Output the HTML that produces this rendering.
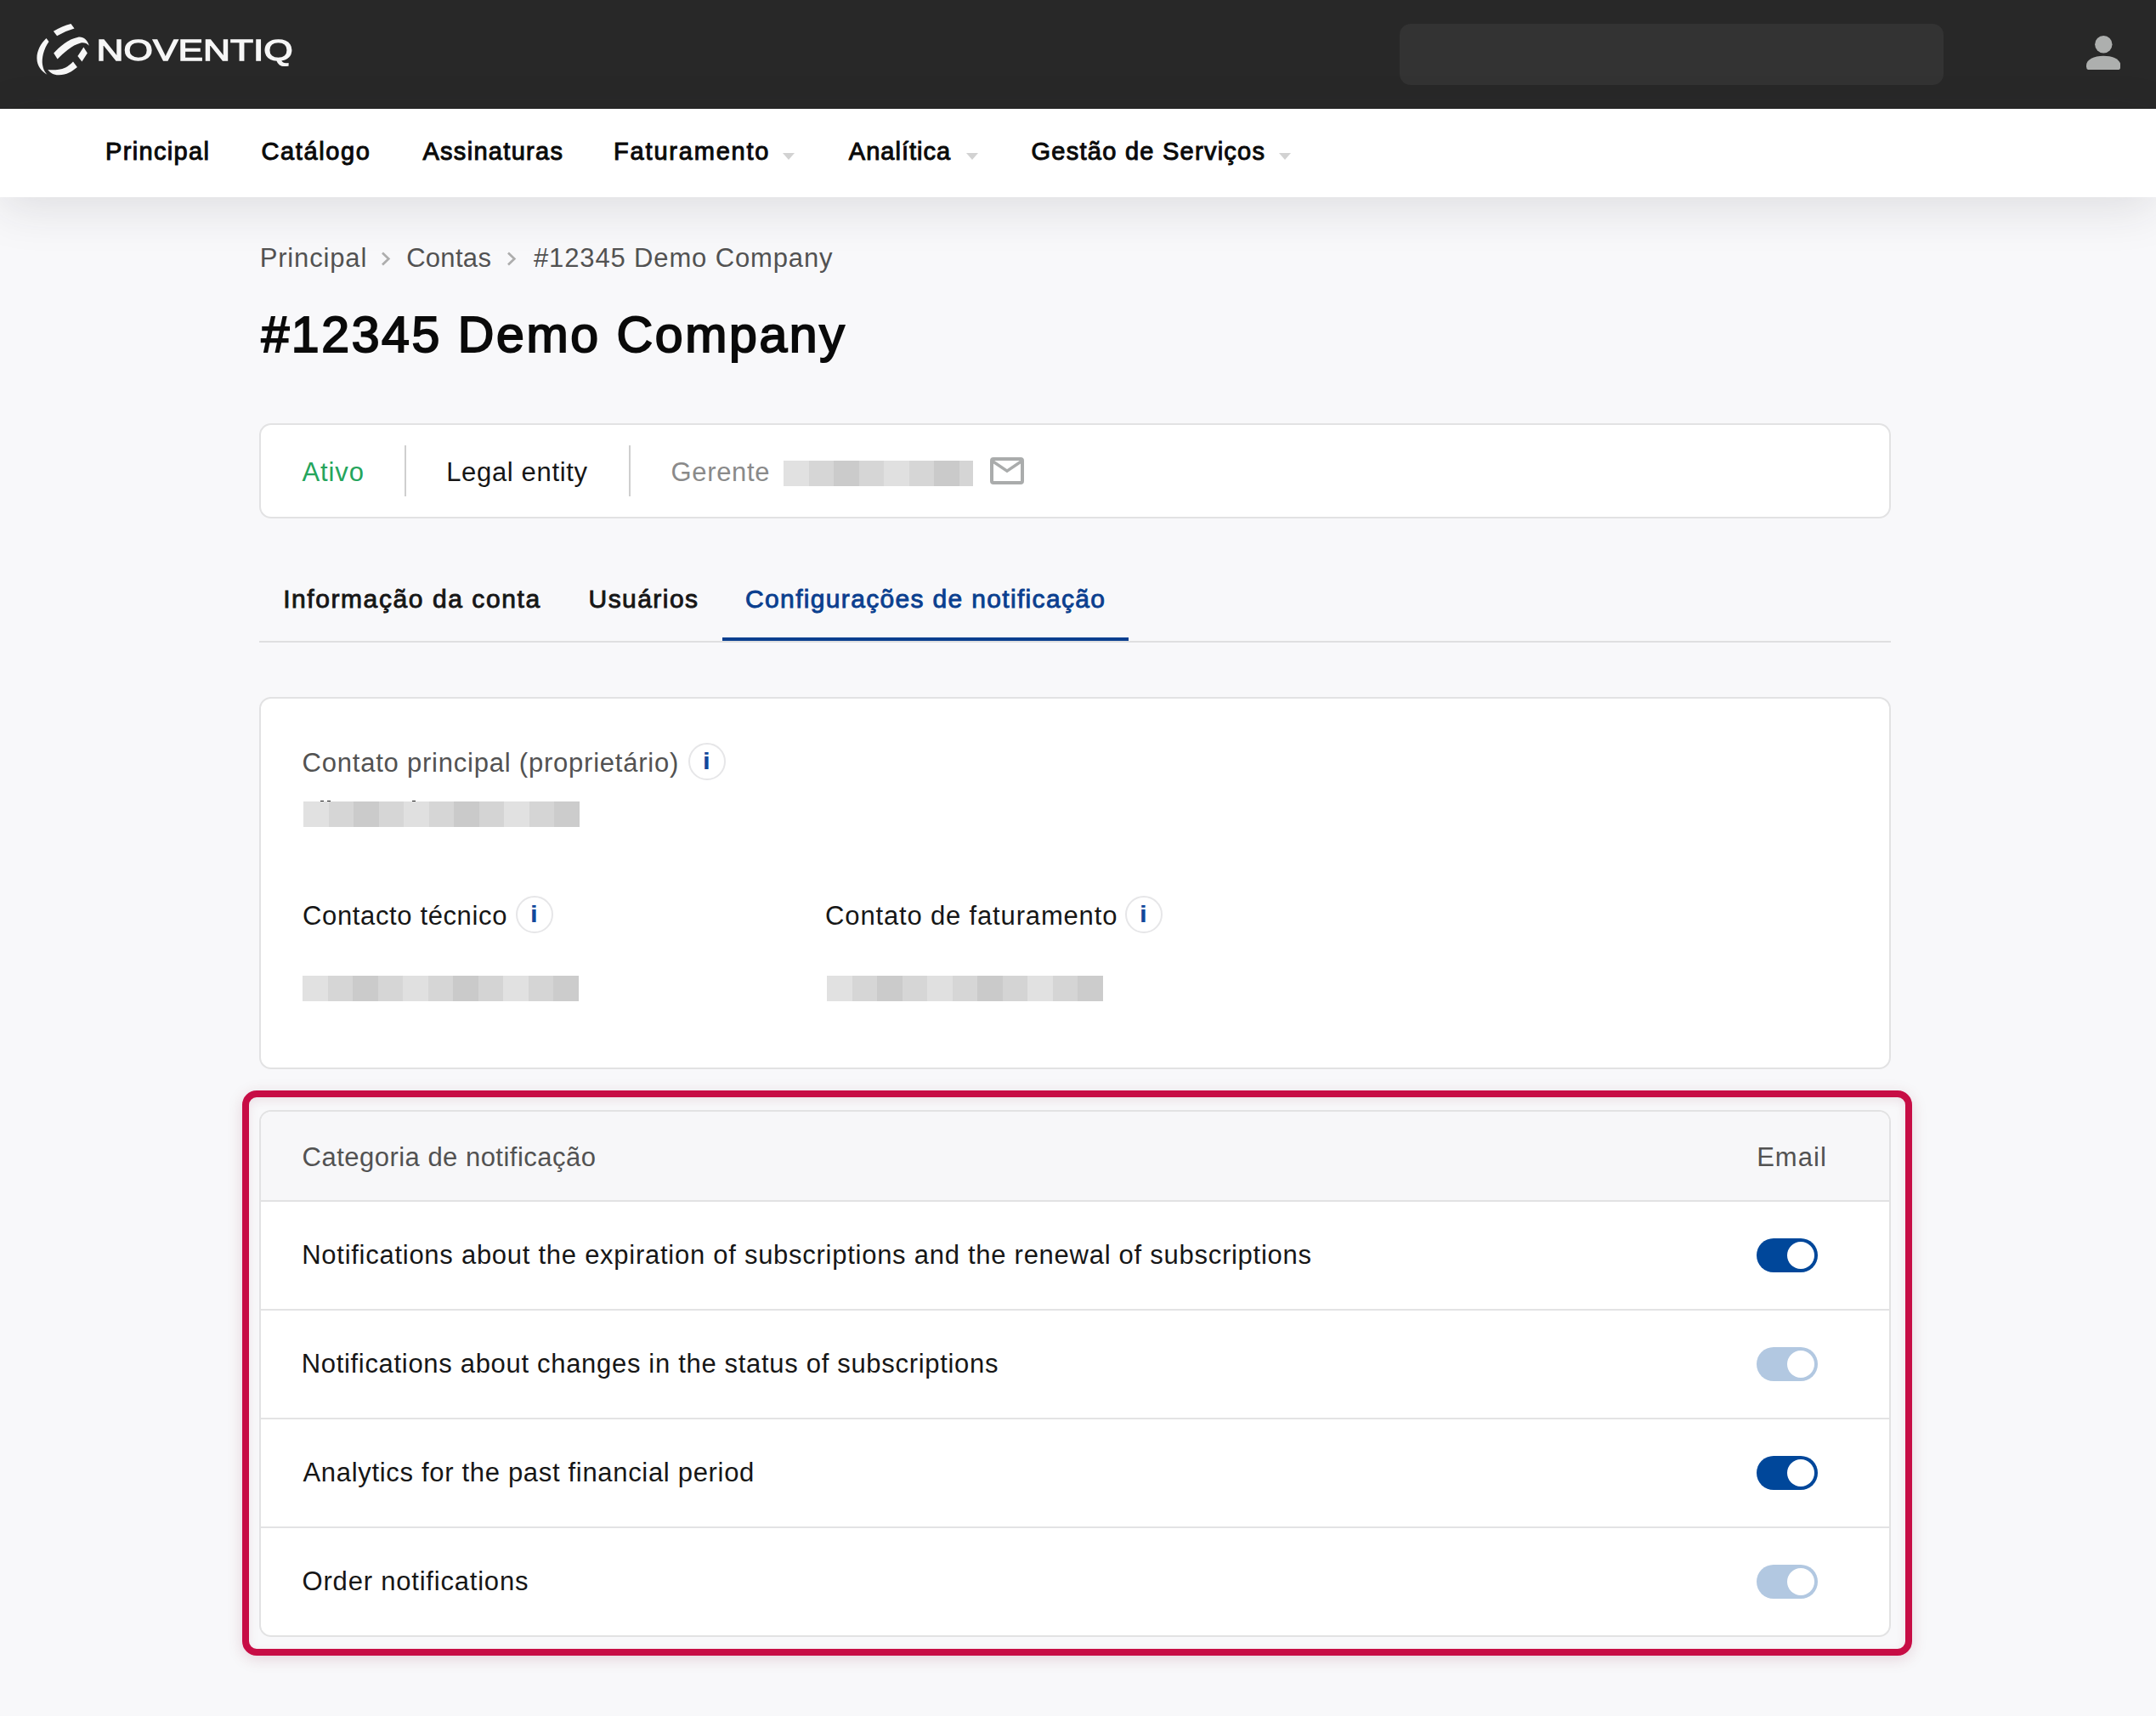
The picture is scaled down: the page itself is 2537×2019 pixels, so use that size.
<!DOCTYPE html>
<html lang="pt">
<head>
<meta charset="utf-8">
<title>#12345 Demo Company</title>
<style>
*{box-sizing:border-box;margin:0;padding:0}
html,body{width:2537px;height:2019px;overflow:hidden}
body{position:relative;background:#f8f8fa;font-family:"Liberation Sans",sans-serif;color:#161616}
ol,li{list-style:none}
h1{margin:0}
.t{position:absolute;white-space:nowrap;line-height:1;font-family:"Liberation Sans",sans-serif}
#n1{left:124.08px;top:164.45px;font-size:29px;font-weight:400;color:#0a0a0a;letter-spacing:1.320px;-webkit-text-stroke:1.0px #0a0a0a}
#n2{left:307.52px;top:164.45px;font-size:29px;font-weight:400;color:#0a0a0a;letter-spacing:1.627px;-webkit-text-stroke:1.0px #0a0a0a}
#n3{left:497.40px;top:164.45px;font-size:29px;font-weight:400;color:#0a0a0a;letter-spacing:1.306px;-webkit-text-stroke:1.0px #0a0a0a}
#n4{left:722.10px;top:164.45px;font-size:29px;font-weight:400;color:#0a0a0a;letter-spacing:1.798px;-webkit-text-stroke:1.0px #0a0a0a}
#n5{left:998.84px;top:164.45px;font-size:29px;font-weight:400;color:#0a0a0a;letter-spacing:1.008px;-webkit-text-stroke:1.0px #0a0a0a}
#n6{left:1213.50px;top:164.45px;font-size:29px;font-weight:400;color:#0a0a0a;letter-spacing:1.260px;-webkit-text-stroke:1.0px #0a0a0a}
#b1{left:305.70px;top:287.76px;font-size:31px;font-weight:400;color:#525252;letter-spacing:0.839px}
#b2{left:478.14px;top:287.76px;font-size:31px;font-weight:400;color:#525252;letter-spacing:0.309px}
#b3{left:628.00px;top:287.76px;font-size:31px;font-weight:400;color:#525252;letter-spacing:0.860px}
#h1{left:307.42px;top:364.96px;font-size:59px;font-weight:400;color:#0a0a0a;letter-spacing:2.597px;-webkit-text-stroke:2.0px #0a0a0a}
#s1{left:355.48px;top:539.66px;font-size:31px;font-weight:400;color:#25a55c;letter-spacing:0.885px}
#s2{left:525.20px;top:539.66px;font-size:31px;font-weight:400;color:#161616;letter-spacing:0.658px}
#s3{left:789.62px;top:539.66px;font-size:31px;font-weight:400;color:#8a8a8a;letter-spacing:0.631px}
#t1{left:333.14px;top:690.31px;font-size:30px;font-weight:400;color:#161616;letter-spacing:1.580px;-webkit-text-stroke:0.9px #161616}
#t2{left:692.60px;top:690.31px;font-size:30px;font-weight:400;color:#161616;letter-spacing:1.432px;-webkit-text-stroke:0.9px #161616}
#t3{left:877.10px;top:690.31px;font-size:30px;font-weight:400;color:#0a3f8f;letter-spacing:1.333px;-webkit-text-stroke:0.9px #0a3f8f}
#c1{left:355.62px;top:882.06px;font-size:31px;font-weight:400;color:#525252;letter-spacing:0.776px}
#c2{left:356.06px;top:1061.56px;font-size:31px;font-weight:400;color:#161616;letter-spacing:0.628px}
#c3{left:971.08px;top:1061.56px;font-size:31px;font-weight:400;color:#161616;letter-spacing:0.838px}
#th1{left:355.60px;top:1346.06px;font-size:31px;font-weight:400;color:#525252;letter-spacing:0.478px}
#th2{left:2067.16px;top:1346.06px;font-size:31px;font-weight:400;color:#525252;letter-spacing:1.031px}
#r1{left:355.20px;top:1461.06px;font-size:31px;font-weight:400;color:#161616;letter-spacing:0.733px}
#r2{left:354.70px;top:1589.06px;font-size:31px;font-weight:400;color:#161616;letter-spacing:0.686px}
#r3{left:356.50px;top:1717.06px;font-size:31px;font-weight:400;color:#161616;letter-spacing:0.682px}
#r4{left:355.58px;top:1845.06px;font-size:31px;font-weight:400;color:#161616;letter-spacing:0.795px}

/* top bar */
header.top{position:absolute;left:0;top:0;width:2537px;height:127.5px;background:#282828;border-bottom:1px solid #1d1d1d}
.logo{position:absolute;left:40px;top:24px;width:320px;height:70px;filter:blur(.45px)}
.search{position:absolute;left:1647px;top:28px;width:640px;height:72px;border-radius:13px;background:#333333}
.user{position:absolute;left:2454.8px;top:41.8px;width:40.4px;height:40.6px}

/* menu */
.menu{position:absolute;left:0;top:127.5px;width:2537px;height:104.5px;background:#fff;box-shadow:0 12px 56px rgba(40,40,50,.125)}
.caret{position:absolute;width:0;height:0;border-left:7.9px solid transparent;border-right:7.9px solid transparent;border-top:8.2px solid #d2d2d2;top:180px}

/* breadcrumb chevrons */
.chev{position:absolute;top:294.6px;width:12px;height:19px}

/* cards */
.card{position:absolute;left:305px;width:1920px;background:#fff;border:2px solid #e2e2e3;border-radius:14px}
.status{top:498px;height:112px}
.vsep{position:absolute;top:524px;width:2px;height:60px;background:#cfcfcf}
.mail{position:absolute;left:1165px;top:538px;width:40px;height:32px}
.px{position:absolute;display:flex}
.px i{display:block;height:100%}
.bit{position:absolute;top:941.6px;width:4px;height:1.6px;background:#222}

/* tabs */
.tabline{position:absolute;left:305px;top:754px;width:1920px;height:2px;background:#dfdfe0}
.tabactive{position:absolute;left:850px;top:750px;width:478px;height:4px;background:#0a3f8f}

.contacts{top:820px;height:438px}
.info{position:absolute;width:44px;height:44px;border:2px solid #e6e6e8;border-radius:50%;background:#fff}
.info b{position:absolute;left:0;top:0;width:40px;height:40px;text-align:center;font:700 28.5px/40px "Liberation Sans",sans-serif;color:#12489b;transform:translate(-0.6px,-1.1px) scaleX(1.1)}

/* highlight */
.hl{position:absolute;left:284.9px;top:1282.8px;width:1965.2px;height:665.3px;border:8.3px solid #c70d45;border-radius:17px;box-shadow:0 4px 18px rgba(120,0,40,.15), inset 0 4px 12px rgba(120,0,40,.09)}
.tbl{top:1306px;height:620px;overflow:hidden;background:#fff}
.tbl .head{position:absolute;left:0;top:0;width:100%;height:105.5px;background:#f7f7f9;border-bottom:2px solid #e2e2e3}
.tbl .sep{position:absolute;left:0;width:100%;height:2px;background:#e3e3e4}
.tg{position:absolute;left:2067px;width:72px;height:40px;border-radius:20px;background:#00479a}
.tg:after{content:"";position:absolute;right:4px;top:4px;width:32px;height:32px;border-radius:50%;background:#fff}
.tg.off{background:#b2c8e1}
</style>
</head>
<body>

<header class="top">
  <svg class="logo" viewBox="0 0 320 70">
    <g fill="#f6f6f6">
      <path d="M22.9 12.8 Q33 6.5 43.5 3.9 L47.5 9.6 Q37 12.5 27.1 18.2 Z"/>
      <path d="M14.5 21 L17.5 25 C11 34 9 45 10 52 C11 58 13 61 15.5 63.8 C9 60 3.5 54 3.4 44.5 C3.3 36 8 27 14.5 21 Z"/>
      <path d="M23.2 38.5 C30 31 40 22 51.9 19.7 C58 18.8 63 23 64.8 29.8 C62 26.5 58 25.8 54.4 26.7 C45 29 35 38 27.6 45.5 Z"/>
      <path d="M58.4 31.6 L62.8 38.5 L56.4 48.5 L51.4 42 Z"/>
      <path d="M46 48.5 L50.9 54.9 C45 60 38 64 29.6 64.3 C23 64.5 19 61.5 16.3 58 C22 58.5 30 58.5 37.1 55.4 C40 54 43 51.5 46 48.5 Z"/>
    </g>
    <text x="73.6" y="46.9" font-family="Liberation Sans, sans-serif" font-size="35" fill="#f6f6f6" stroke="#f6f6f6" stroke-width="1.3" textLength="231" lengthAdjust="spacingAndGlyphs">NOVENTIQ</text>
  </svg>
  <div class="search"></div>
  <svg class="user" viewBox="0 0 40.4 40.6"><circle cx="20.3" cy="10.2" r="10.2" fill="#adafae"/><path d="M0 36.2 V35 C0 28 9 23.7 20.2 23.7 S40.4 28 40.4 35 V36.2 Q40.4 40.5 36 40.5 H4.4 Q0 40.5 0 36.2 Z" fill="#adafae"/></svg>
</header>

<nav aria-label="Menu principal">
  <div class="menu"></div>
  <a class="t" id="n1">Principal</a>
  <a class="t" id="n2">Catálogo</a>
  <a class="t" id="n3">Assinaturas</a>
  <a class="t" id="n4">Faturamento</a><i class="caret" style="left:921px"></i>
  <a class="t" id="n5">Analítica</a><i class="caret" style="left:1137px"></i>
  <a class="t" id="n6">Gestão de Serviços</a><i class="caret" style="left:1505px"></i>
</nav>

<main>
  <ol class="crumbs">
    <li><a class="t" id="b1">Principal</a><svg class="chev" style="left:448px" viewBox="0 0 12 19"><path d="M2 2.6 L9.3 9.5 L2 16.4" fill="none" stroke="#adadad" stroke-width="2.7"/></svg></li>
    <li><a class="t" id="b2">Contas</a><svg class="chev" style="left:596px" viewBox="0 0 12 19"><path d="M2 2.6 L9.3 9.5 L2 16.4" fill="none" stroke="#adadad" stroke-width="2.7"/></svg></li>
    <li><span class="t" id="b3">#12345 Demo Company</span></li>
  </ol>

  <h1 class="t" id="h1">#12345 Demo Company</h1>

  <section class="summary">
    <div class="card status"></div>
    <span class="t" id="s1">Ativo</span>
    <i class="vsep" style="left:476px"></i>
    <span class="t" id="s2">Legal entity</span>
    <i class="vsep" style="left:740.3px"></i>
    <span class="t" id="s3">Gerente</span>
    <div class="px" style="left:922px;top:542.2px;width:223px;height:29.5px"><i style="width:29.5px;background:#e1e1e1"></i><i style="width:29.5px;background:#d6d6d6"></i><i style="width:29.5px;background:#cbcbcb"></i><i style="width:29.5px;background:#d6d6d6"></i><i style="width:29.5px;background:#e0e0e0"></i><i style="width:29.5px;background:#d6d6d6"></i><i style="width:29.5px;background:#cacaca"></i><i style="width:16.5px;background:#d5d5d5"></i></div>
    <svg class="mail" viewBox="0 0 40 32"><rect x="2" y="2" width="36" height="28" rx="2" fill="none" stroke="#aaacac" stroke-width="4"/><path d="M3.5 5 L20 16.2 L36.5 5" fill="none" stroke="#aaacac" stroke-width="3.5"/></svg>
  </section>

  <div class="tabs" role="tablist">
    <a class="t" role="tab" id="t1">Informação da conta</a>
    <a class="t" role="tab" id="t2">Usuários</a>
    <a class="t" role="tab" aria-selected="true" id="t3">Configurações de notificação</a>
    <i class="tabline"></i><i class="tabactive"></i>
  </div>

  <section class="contactbox">
    <div class="card contacts"></div>
    <div class="field">
      <label class="t" id="c1">Contato principal (proprietário)</label><span class="info" style="left:810px;top:873.9px"><b>i</b></span>
      <i class="bit" style="left:376.5px"></i><i class="bit" style="left:385px"></i><i class="bit" style="left:485px"></i>
      <div class="px" style="left:357px;top:943px;width:325px;height:29.9px"><i style="width:29.55px;background:#e1e1e1"></i><i style="width:29.55px;background:#d6d6d6"></i><i style="width:29.55px;background:#cbcbcb"></i><i style="width:29.55px;background:#d6d6d6"></i><i style="width:29.55px;background:#e0e0e0"></i><i style="width:29.55px;background:#d6d6d6"></i><i style="width:29.55px;background:#cacaca"></i><i style="width:29.55px;background:#d4d4d4"></i><i style="width:29.55px;background:#e1e1e1"></i><i style="width:29.55px;background:#d5d5d5"></i><i style="width:29.55px;background:#cccccc"></i></div>
    </div>
    <div class="field">
      <label class="t" id="c2">Contacto técnico</label><span class="info" style="left:606.9px;top:1053.8px"><b>i</b></span>
      <div class="px" style="left:356px;top:1148px;width:325px;height:29.5px"><i style="width:29.55px;background:#e1e1e1"></i><i style="width:29.55px;background:#d6d6d6"></i><i style="width:29.55px;background:#cbcbcb"></i><i style="width:29.55px;background:#d6d6d6"></i><i style="width:29.55px;background:#e0e0e0"></i><i style="width:29.55px;background:#d6d6d6"></i><i style="width:29.55px;background:#cacaca"></i><i style="width:29.55px;background:#d4d4d4"></i><i style="width:29.55px;background:#e1e1e1"></i><i style="width:29.55px;background:#d5d5d5"></i><i style="width:29.55px;background:#cccccc"></i></div>
    </div>
    <div class="field">
      <label class="t" id="c3">Contato de faturamento</label><span class="info" style="left:1323.9px;top:1053.8px"><b>i</b></span>
      <div class="px" style="left:973px;top:1148px;width:325px;height:29.5px"><i style="width:29.55px;background:#e1e1e1"></i><i style="width:29.55px;background:#d6d6d6"></i><i style="width:29.55px;background:#cbcbcb"></i><i style="width:29.55px;background:#d6d6d6"></i><i style="width:29.55px;background:#e0e0e0"></i><i style="width:29.55px;background:#d6d6d6"></i><i style="width:29.55px;background:#cacaca"></i><i style="width:29.55px;background:#d4d4d4"></i><i style="width:29.55px;background:#e1e1e1"></i><i style="width:29.55px;background:#d5d5d5"></i><i style="width:29.55px;background:#cccccc"></i></div>
    </div>
  </section>

  <section class="notifications">
    <div class="hl"></div>
    <div class="card tbl">
      <div class="head"></div>
      <i class="sep" style="top:232px"></i>
      <i class="sep" style="top:360px"></i>
      <i class="sep" style="top:488px"></i>
    </div>
    <div role="table">
      <div role="row"><span class="t" role="columnheader" id="th1">Categoria de notificação</span><span class="t" role="columnheader" id="th2">Email</span></div>
      <div role="row"><span class="t" role="cell" id="r1">Notifications about the expiration of subscriptions and the renewal of subscriptions</span><span class="tg" role="switch" aria-checked="true" style="top:1457px"></span></div>
      <div role="row"><span class="t" role="cell" id="r2">Notifications about changes in the status of subscriptions</span><span class="tg off" role="switch" aria-checked="true" aria-disabled="true" style="top:1585px"></span></div>
      <div role="row"><span class="t" role="cell" id="r3">Analytics for the past financial period</span><span class="tg" role="switch" aria-checked="true" style="top:1713px"></span></div>
      <div role="row"><span class="t" role="cell" id="r4">Order notifications</span><span class="tg off" role="switch" aria-checked="true" aria-disabled="true" style="top:1841px"></span></div>
    </div>
  </section>
</main>
</body>
</html>
